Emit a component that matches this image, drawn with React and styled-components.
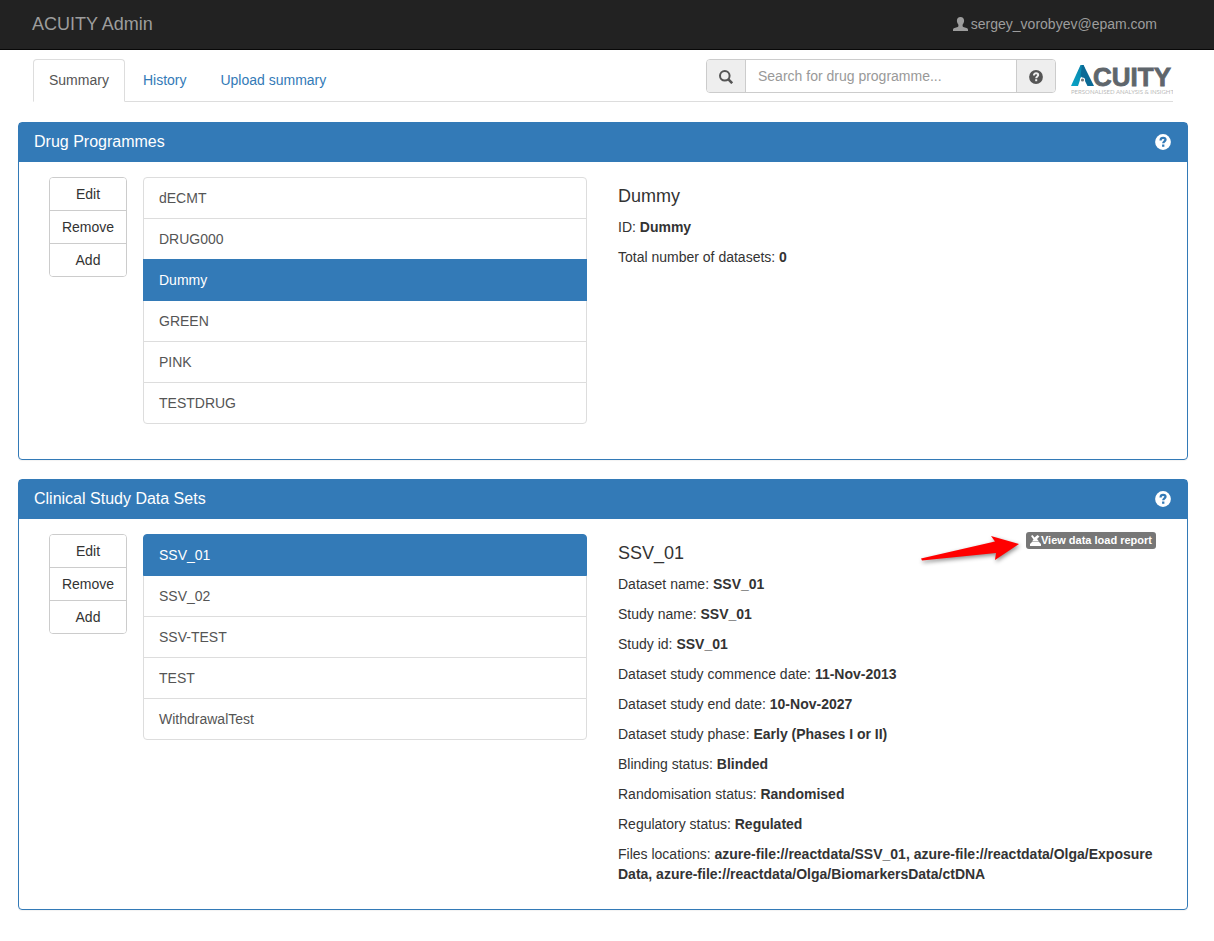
import React from "react";
import styled, { createGlobalStyle } from "styled-components";

const blue = "#337ab7";

const GlobalStyle = createGlobalStyle`
  *, *::before, *::after { box-sizing: border-box; }
  body {
    margin: 0;
    background: #fff;
    color: #333;
    font: 14px/20px "Liberation Sans", Arial, sans-serif;
  }
  button, input { font: inherit; }
`;

const NavBar = styled.header`
  display: flex;
  justify-content: space-between;
  align-items: center;
  height: 50px;
  padding: 0 57px 2px 32px;
  background: #222;
  border-bottom: 1px solid #080808;
  color: #9d9d9d;
`;

const Brand = styled.a`
  color: inherit;
  font-size: 18px;
  text-decoration: none;
`;

const User = styled.span`
  display: flex;
  align-items: center;
  gap: 3px;
`;

const Page = styled.main`
  padding: 9px 26px 31px 18px;
`;

const TopRow = styled.div`
  display: flex;
  align-items: flex-start;
  height: 43px;
  margin: 0 15px 20px;
  border-bottom: 1px solid #ddd;
`;

const Tabs = styled.nav`
  display: flex;
  gap: 2px;
  margin-right: auto;
`;

const Tab = styled.a`
  height: 43px;
  padding: 10px 15px;
  border: 1px solid ${(p) => (p.$active ? "#ddd" : "transparent")};
  border-bottom-color: ${(p) => (p.$active ? "#fff" : "transparent")};
  border-radius: 4px 4px 0 0;
  color: ${(p) => (p.$active ? "#555" : blue)};
  text-decoration: none;
`;

const SearchGroup = styled.form`
  display: flex;
  width: 350px;
  height: 34px;
  margin-right: 14px;
  border: 1px solid #ccc;
  border-radius: 4px;
  overflow: hidden;
`;

const Addon = styled.button`
  display: flex;
  align-items: center;
  justify-content: center;
  width: 38px;
  padding: 2px 0 0;
  border: 0;
  background: #eee;
  color: #555;
`;

const SearchInput = styled.input`
  flex: 1;
  min-width: 0;
  padding: 6px 12px;
  border: solid #ccc;
  border-width: 0 1px;
  color: #555;
  outline: 0;
  &::placeholder { color: #999; opacity: 1; }
`;

const Panel = styled.section`
  margin-bottom: 19px;
  border: 1px solid ${blue};
  border-radius: 4px;
  box-shadow: 0 1px 1px rgba(0, 0, 0, 0.05);
`;

const PanelHeading = styled.div`
  display: flex;
  align-items: center;
  justify-content: space-between;
  height: 39px;
  padding: 0 16px 2px 15px;
  background: ${blue};
  color: #fff;
`;

const PanelTitle = styled.h2`
  margin: 0;
  font-size: 16px;
  font-weight: 400;
`;

const HelpButton = styled.button`
  display: flex;
  padding: 0;
  border: 0;
  background: none;
  color: #fff;
`;

const PanelBody = styled.div`
  display: grid;
  grid-template-columns: 78px minmax(0, 444fr) minmax(0, 554fr);
  column-gap: 16px;
  align-items: start;
  padding: 15px 30px;
`;

const ButtonStack = styled.div`
  display: flex;
  flex-direction: column;
  border: 1px solid #ccc;
  border-radius: 4px;
  overflow: hidden;
`;

const StackButton = styled.button`
  height: 33px;
  padding: 0;
  border: 0;
  background: #fff;
  color: #333;
  & + & { border-top: 1px solid #ccc; }
  &:first-child { height: 32px; }
`;

const List = styled.div`
  display: flex;
  flex-direction: column;
  margin-bottom: 20px;
`;

const ListItem = styled.button`
  height: 42px;
  margin-bottom: -1px;
  padding: 0 15px;
  border: 1px solid ${(p) => (p.$active ? blue : "#ddd")};
  background: ${(p) => (p.$active ? blue : "#fff")};
  color: ${(p) => (p.$active ? "#fff" : "#555")};
  position: relative;
  z-index: ${(p) => (p.$active ? 1 : 0)};
  text-align: left;
  &:first-child { border-radius: 4px 4px 0 0; }
  &:last-child { margin-bottom: 0; border-radius: 0 0 4px 4px; }
`;

const Details = styled.div`
  position: relative;
  padding-left: 15px;
`;

const DetailsHead = styled.div`
  display: flex;
  justify-content: space-between;
  align-items: flex-start;
  height: 40px;
`;

const DetailsTitle = styled.h3`
  margin: 9px 0 0;
  font-size: 18px;
  font-weight: 400;
`;

const Field = styled.p`
  margin: 0 0 10px;
`;

const ReportLink = styled.a`
  display: flex;
  align-items: center;
  height: 17px;
  margin: -2px 1px 0 0;
  padding: 0 4px;
  border-radius: 3px;
  background: #777;
  color: #fff;
  font-size: 11px;
  font-weight: 700;
  line-height: 17px;
  text-decoration: none;
`;

const Arrow = styled.svg`
  position: absolute;
  top: -4px;
  right: 131px;
`;

const UserIcon = () => (
  <svg width="15" height="14" viewBox="0 0 15 14" fill="currentColor" aria-hidden="true">
    <path d="M7.500 0C5.200 0 3.900 1.500 3.900 3.600C3.900 5.300 4.500 6.700 5.400 7.800V9C5.400 9.500 5.200 9.700 4.700 9.900L1.500 11C.4 11.400 0 12 0 13V14H15V13C15 12 14.600 11.400 13.500 11L10.300 9.900C9.800 9.700 9.600 9.500 9.600 9V7.800C10.500 6.700 11.100 5.300 11.100 3.600C11.100 1.500 9.800 0 7.500 0Z" />
  </svg>
);

const SearchIcon = () => (
  <svg width="14" height="14" viewBox="0 0 14 14" fill="none" stroke="currentColor" aria-hidden="true">
    <circle cx="5.800" cy="5.800" r="4.800" strokeWidth="2" />
    <path d="M9.200 9.200L13.200 13.200" strokeWidth="2.600" />
  </svg>
);

const HelpIcon = ({ size, mark }) => (
  <svg width={size} height={size} viewBox="0 0 14 14" aria-hidden="true">
    <circle cx="7" cy="7" r="6.900" fill="currentColor" />
    <path d="M4.900 5.600C4.900 4 5.700 3.300 7.100 3.300C8.500 3.300 9.200 4 9.200 5C9.200 6.400 7.200 6.500 7.200 8.200" fill="none" stroke={mark} strokeWidth="2" />
    <rect x="6.200" y="9.200" width="2" height="2" fill={mark} />
  </svg>
);

const ReportIcon = () => (
  <svg width="11" height="11" viewBox="0 0 11 11" fill="currentColor" aria-hidden="true">
    <path d="M2 7H9L11 9V11H0V9Z" />
    <path d="M1 1L2.500 0L4.500 2.500L7.500 0L9.500 1.500L7 4L9 6.500H2L3.500 4.500Z" />
  </svg>
);

const Logo = () => (
  <svg width="103" height="36" viewBox="0 0 103 36" role="img" aria-label="ACUITY Personalised Analysis and Insight">
    <defs>
      <linearGradient id="logoLeg" x1="0" y1="1" x2="1" y2="0">
        <stop offset="0" stopColor="#08a5c8" />
        <stop offset="1" stopColor="#0b7fa6" />
      </linearGradient>
    </defs>
    <path d="M1 27L10.500 6H13.500L15 10L11 18L8 27Z" fill="url(#logoLeg)" />
    <path d="M12 6H13.500L24 27H17.500L15 22L10.500 17Z" fill="#0a6a96" />
    <circle cx="12.500" cy="21" r="2.600" fill="#fff" />
    <circle cx="12.500" cy="21" r="1.600" fill="#70777c" />
    <text x="23" y="27" fontFamily="Liberation Sans, sans-serif" fontSize="26" fontWeight="700" fill="#5f666c" stroke="#5f666c" strokeWidth="0.800">CUITY</text>
    <text x="1" y="35" fontFamily="Lato, sans-serif" fontSize="6" fill="#bbb">PERSONALISED ANALYSIS &amp; INSIGHT</text>
  </svg>
);

const RedArrow = () => (
  <Arrow width="108" height="38" viewBox="0 0 108 38" aria-hidden="true">
    <path
      d="M3 28.500L77 11.500L73 6L101 14L77 30L78 23L4 30.500Z"
      fill="#f00"
      filter="drop-shadow(1px 2px 2px rgba(0,0,0,.45))"
    />
  </Arrow>
);

const programmes = ["dECMT", "DRUG000", "Dummy", "GREEN", "PINK", "TESTDRUG"];
const dataSets = ["SSV_01", "SSV_02", "SSV-TEST", "TEST", "WithdrawalTest"];

const programmeFields = [
  ["ID", "Dummy"],
  ["Total number of datasets", "0"],
];

const dataSetFields = [
  ["Dataset name", "SSV_01"],
  ["Study name", "SSV_01"],
  ["Study id", "SSV_01"],
  ["Dataset study commence date", "11-Nov-2013"],
  ["Dataset study end date", "10-Nov-2027"],
  ["Dataset study phase", "Early (Phases I or II)"],
  ["Blinding status", "Blinded"],
  ["Randomisation status", "Randomised"],
  ["Regulatory status", "Regulated"],
  [
    "Files locations",
    "azure-file://reactdata/SSV_01, azure-file://reactdata/Olga/Exposure Data, azure-file://reactdata/Olga/BiomarkersData/ctDNA",
  ],
];

const EntityPanel = ({ title, items, selected, fields, children }) => (
  <Panel>
    <PanelHeading>
      <PanelTitle>{title}</PanelTitle>
      <HelpButton type="button" aria-label={`Help: ${title}`}>
        <HelpIcon size={16} mark={blue} />
      </HelpButton>
    </PanelHeading>
    <PanelBody>
      <ButtonStack>
        {["Edit", "Remove", "Add"].map((label) => (
          <StackButton type="button" key={label}>{label}</StackButton>
        ))}
      </ButtonStack>
      <List>
        {items.map((item) => (
          <ListItem type="button" key={item} $active={item === selected}>{item}</ListItem>
        ))}
      </List>
      <Details>
        <DetailsHead>
          <DetailsTitle>{selected}</DetailsTitle>
          {children}
        </DetailsHead>
        {fields.map(([label, value]) => (
          <Field key={label}>{label}: <b>{value}</b></Field>
        ))}
      </Details>
    </PanelBody>
  </Panel>
);

export default function App() {
  return (
    <>
      <GlobalStyle />
      <NavBar>
        <Brand href="#">ACUITY Admin</Brand>
        <User><UserIcon />sergey_vorobyev@epam.com</User>
      </NavBar>
      <Page>
        <TopRow>
          <Tabs>
            <Tab href="#summary" $active>Summary</Tab>
            <Tab href="#history">History</Tab>
            <Tab href="#upload">Upload summary</Tab>
          </Tabs>
          <SearchGroup role="search">
            <Addon type="submit" aria-label="Search"><SearchIcon /></Addon>
            <SearchInput type="text" aria-label="Search for drug programme" placeholder="Search for drug programme..." />
            <Addon type="button" aria-label="Search help"><HelpIcon size={14} mark="#eee" /></Addon>
          </SearchGroup>
          <Logo />
        </TopRow>
        <EntityPanel title="Drug Programmes" items={programmes} selected="Dummy" fields={programmeFields} />
        <EntityPanel title="Clinical Study Data Sets" items={dataSets} selected="SSV_01" fields={dataSetFields}>
          <ReportLink href="#report"><ReportIcon />View data load report</ReportLink>
          <RedArrow />
        </EntityPanel>
      </Page>
    </>
  );
}
